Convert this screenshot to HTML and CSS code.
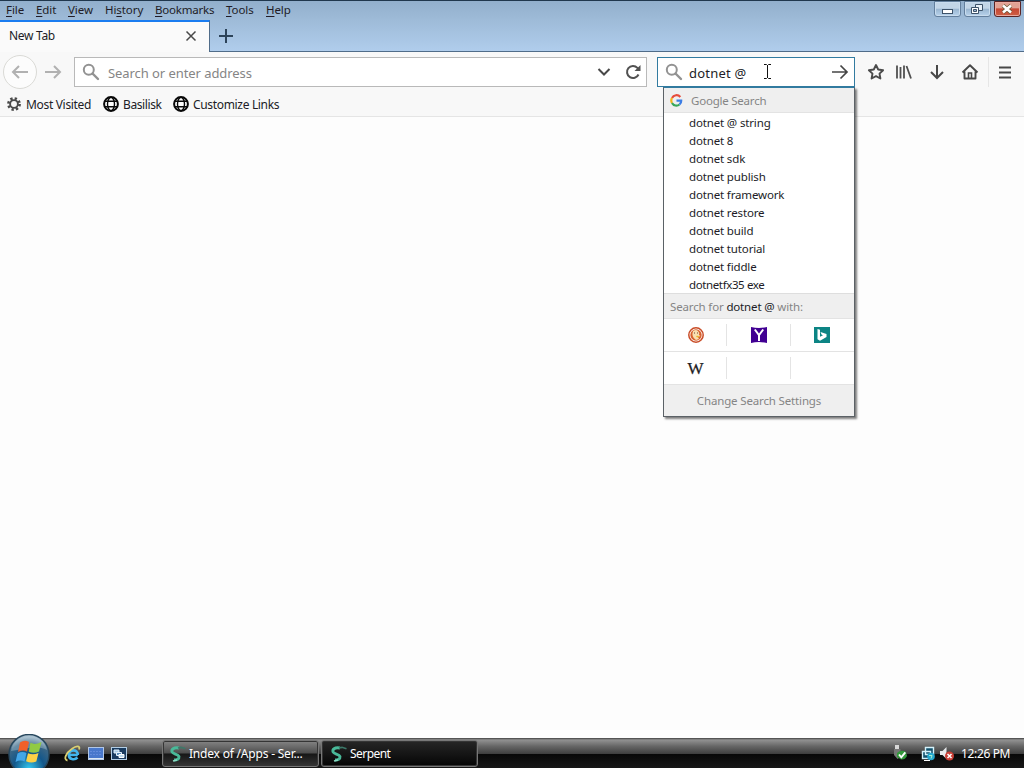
FILE: index.html
```html
<!DOCTYPE html>
<html lang="en">
<head>
<meta charset="utf-8">
<title>New Tab</title>
<link rel="stylesheet" href="styles.css">
</head>
<body>
<svg class="defs" width="0" height="0">
  <defs>
    <symbol id="lens" viewBox="0 0 18 18"><circle cx="6.8" cy="6.8" r="5" fill="none" stroke="currentColor" stroke-width="2"/><path d="M10.500 10.500L16 16" stroke="currentColor" stroke-width="2.400" stroke-linecap="round"/></symbol>
    <symbol id="globe" viewBox="0 0 16 16"><circle cx="8" cy="8" r="6.900" fill="#fff" stroke="#080808" stroke-width="2"/><ellipse cx="8" cy="8" rx="3.500" ry="6.600" fill="none" stroke="#080808" stroke-width="1.400"/><path d="M2 5.300h12M2 10.700h12" stroke="#080808" stroke-width="1.500"/></symbol>
    <symbol id="serpent" viewBox="0 0 18 18"><path d="M10 3C4.500 2 2 4.500 3.200 7.200c1 2 6 1.800 6.800 4.300.3 2.500-2 3.500-5 3.500" fill="none" stroke="#49b999" stroke-width="2.900"/><path d="M9 3l3-.7 4.500 1.500" fill="none" stroke="#3c7869" stroke-width="1.700"/><path d="M4 16l4-1" stroke="#8bdcc5" stroke-width="1.500"/></symbol>
  </defs>
</svg>
<div class="screen">
  <header class="titlebar">
    <nav class="menu">
      <span class="m-file"><u>F</u>ile</span><span class="m-edit"><u>E</u>dit</span><span class="m-view"><u>V</u>iew</span><span class="m-history">Hi<u>s</u>tory</span><span class="m-bookmarks"><u>B</u>ookmarks</span><span class="m-tools"><u>T</u>ools</span><span class="m-help"><u>H</u>elp</span>
    </nav>
    <div class="window-buttons">
      <span class="win"><svg width="26" height="15" viewBox="0 0 26 15"><rect x="8.500" y="8.500" width="10" height="4" fill="#fff" stroke="#3d5269"/></svg></span>
      <span class="win"><svg width="26" height="15" viewBox="0 0 26 15"><path d="M11.500 3.500h7v6h-7z" fill="#e8f0f8" stroke="#3d5269"/><path d="M7.500 6.500h7v6h-7z" fill="#fff" stroke="#3d5269"/><path d="M9.500 8.500h3v2h-3z" fill="#9bb8d6" stroke="#3d5269"/></svg></span>
      <span class="win close"><svg width="26" height="15" viewBox="0 0 26 15"><path d="M9 4.500l8 7M17 4.500l-8 7" stroke="#653" stroke-width="4"/><path d="M9 4.500l8 7M17 4.500l-8 7" stroke="#fff" stroke-width="2.600"/></svg></span>
    </div>
  </header>
  <div class="tabs">
    <div class="tab"><span class="tab-name">New Tab</span><svg width="12" height="12" viewBox="0 0 12 12"><path d="M1.500 1.500l9 9M10.500 1.500l-9 9" stroke="#484848" stroke-width="1.500"/></svg></div>
    <div class="new-tab"><svg width="16" height="16" viewBox="0 0 16 16"><path d="M8 1v14M1 8h14" stroke="#2c4359" stroke-width="2"/></svg></div>
  </div>
  <div class="toolbar">
    <div class="back"><svg width="18" height="16" viewBox="0 0 18 16"><path d="M17 8H2M8 2L2 8l6 6" fill="none" stroke="#b1b1b1" stroke-width="2"/></svg></div>
    <svg class="forward" width="18" height="16" viewBox="0 0 18 16"><path d="M1 8h15M10 2l6 6-6 6" fill="none" stroke="#b1b1b1" stroke-width="2"/></svg>
    <div class="address">
      <svg class="lens" width="18" height="18"><use href="#lens"/></svg>
      <span class="placeholder">Search or enter address</span>
      <svg class="chevron" width="14" height="10" viewBox="0 0 14 10"><path d="M1.500 2L7 7.500 12.500 2" fill="none" stroke="#484848" stroke-width="2"/></svg>
      <svg width="18" height="18" viewBox="0 0 18 18"><path d="M14.500 11.500A6 6 0 1 1 13.400 4.900L15.500 7" fill="none" stroke="#515151" stroke-width="2"/><path d="M16.500 2v6h-6z" fill="#515151"/></svg>
    </div>
    <div class="search">
      <svg class="lens" width="18" height="18"><use href="#lens"/></svg>
      <span class="query">dotnet @</span>
      <svg width="18" height="16" viewBox="0 0 18 16"><path d="M1 8h15M9.500 1.500L16 8l-6.500 6.500" fill="none" stroke="#454545" stroke-width="1.700"/></svg>
    </div>
    <div class="tools">
      <svg width="18" height="18" viewBox="0 0 18 18"><path d="M9 2l2.200 4.500 4.900.7-3.600 3.400.9 4.900L9 13.200l-4.400 2.300.9-4.900L1.900 7.200l4.900-.7z" fill="none" stroke="#4b4b4b" stroke-width="1.900" stroke-linejoin="round"/></svg>
      <svg width="18" height="18" viewBox="0 0 18 18"><path d="M2 2.500v13M5.500 4v11.500M9 2.500v13M11.500 3l4.500 12.500" stroke="#505050" stroke-width="1.800"/></svg>
      <svg width="18" height="18" viewBox="0 0 18 18"><path d="M9 2v13M3 9l6 6 6-6" fill="none" stroke="#484848" stroke-width="2"/></svg>
      <svg width="18" height="18" viewBox="0 0 18 18"><path d="M1.500 9.500L9 2.200l7.500 7.300M3.500 8.500v7h11v-7" fill="none" stroke="#484848" stroke-width="1.900" stroke-linejoin="round"/><path d="M7.500 15.500V10h3v5.500" fill="none" stroke="#484848" stroke-width="1.600"/></svg>
    </div>
    <div class="hamburger"><svg width="12" height="13" viewBox="0 0 12 13"><path d="M0 1.500h12M0 6.500h12M0 11.500h12" stroke="#484848" stroke-width="1.800"/></svg></div>
  </div>
  <div class="bookmarks">
    <svg width="14" height="14" viewBox="0 0 14 14"><circle cx="7" cy="7" r="5.600" fill="none" stroke="#4a4a4a" stroke-width="2.600" stroke-dasharray="2.300 2.098"/><circle cx="7" cy="7" r="3.900" fill="#f8f8f8" stroke="#4a4a4a" stroke-width="1.900"/></svg>
    <span class="bk-visited">Most Visited</span>
    <svg width="16" height="16"><use href="#globe"/></svg><span class="bk-basilisk">Basilisk</span>
    <svg width="16" height="16"><use href="#globe"/></svg><span class="bk-links">Customize Links</span>
  </div>
  <main class="page"></main>
  <footer class="taskbar">
    <div class="start"><svg width="44" height="34" viewBox="0 0 44 34">
      <defs><radialGradient id="orb" cx=".5" cy=".85" r=".85"><stop offset="0" stop-color="#35c8ef"/><stop offset=".45" stop-color="#14578a"/><stop offset=".75" stop-color="#3b6685"/><stop offset="1" stop-color="#bed0dc"/></radialGradient></defs>
      <circle cx="22" cy="20.500" r="20" fill="url(#orb)" stroke="#27475d" stroke-width="1.500"/>
      <path d="M4 17C7-2 36-3 40 16 30 10 17 15 4 17z" fill="#dcebf2" opacity=".3"/>
      <path d="M13 8.500q4.500-3 9-.5l-2 9.500q-4-2.300-9 .4z" fill="#f0602a"/><path d="M23.500 8.800q4.500 2.500 11-.8l-2.500 9.500q-5 2.500-10.300.2z" fill="#91ca43"/><path d="M10.500 19.500q4.500-2.500 9-.5l-2 8.500q-4-2-9 .5z" fill="#43a6e8"/><path d="M21 19.200q5 2.200 10.500-.2l-2.200 8.500q-5 2.300-10.200-.2z" fill="#fcd046"/>
    </svg></div>
    <div class="quick">
      <svg width="17" height="17" viewBox="0 0 17 17"><path d="M13.800 10H5.500M13.500 12.500c-3 3-8.800 2-8.600-2.800.2-5.500 8.800-6 9 .3" fill="none" stroke="#42b4ec" stroke-width="2.700"/><path d="M3.500 15.500C-1 14.500 2 8 8 3.800 13-.2 16.500 1 15 4.500" fill="none" stroke="#d9cf72" stroke-width="1.800"/></svg>
      <svg width="16" height="14" viewBox="0 0 16 14"><rect x=".5" y=".5" width="15" height="12" fill="#4978cc" stroke="#b1c7e7"/><path d="M2 4.500h11M2 7.500h12" stroke="#638bdb" stroke-dasharray="2 1"/><path d="M1 11.500h14" stroke="#dce8f5"/></svg>
      <svg width="16" height="14" viewBox="0 0 16 14"><rect x=".5" y=".5" width="15" height="12" fill="#193b60" stroke="#b3cee5"/><path d="M3 3h5v3H3z" fill="#a9cbe5" stroke="#e4f1fb"/><path d="M5.500 5.500h5v3h-5z" fill="#5589b7" stroke="#e4f1fb"/><path d="M8 7.500h5v3H8z" fill="#bddcf1" stroke="#fff"/></svg>
    </div>
    <div class="tasks">
      <div class="task"><svg width="18" height="18"><use href="#serpent"/></svg><span class="task-index">Index of /Apps - Ser...</span></div>
      <div class="task active"><svg width="18" height="18"><use href="#serpent"/></svg><span class="task-serpent">Serpent</span></div>
    </div>
    <div class="tray">
      <svg class="usb" width="16" height="17" viewBox="0 0 16 17"><path d="M3 0h4v4H3z" fill="#d8d8d8"/><path d="M2 4h6.500v8l-3 2-3.500-4z" fill="#777"/><path d="M5 8q4-4 9-1l1 4q-2 4-6 3.500L5 12z" fill="#32983b"/><path d="M7 9.500l2.300 2.800 4-5" fill="none" stroke="#fff" stroke-width="1.900"/></svg>
      <svg width="16" height="16" viewBox="0 0 16 16"><path d="M5.500 1.500h8v7h-8zM2.500 5.500h8v7h-8z" fill="#12516c" stroke="#d5f2fb" stroke-width="1.400"/><path d="M4 14.500h6" stroke="#fff"/><circle cx="11" cy="10.500" r="3.800" fill="#26a7cd"/><path d="M9 9.500h3l-1 3" stroke="#a4efcf" fill="none"/></svg>
      <svg width="16" height="16" viewBox="0 0 16 16"><path d="M1 5h2.500L7.500 1v12l-4-4H1z" fill="#e7eaec"/><circle cx="10.500" cy="10" r="4.500" fill="#c93e35"/><path d="M8.500 8l4 4M12.500 8l-4 4" stroke="#fff" stroke-width="1.500"/></svg>
      <span class="clock">12:26 PM</span>
    </div>
  </footer>

  <section class="popup">
    <div class="provider"><svg width="13" height="13" viewBox="0 0 13 13" fill="none" stroke-width="2.200"><path d="M10.300 3A5 5 0 0 0 2 4" stroke="#e64b3b"/><path d="M2 4a5 5 0 0 0 0 5" stroke="#f3b41b"/><path d="M2 9a5 5 0 0 0 7.500 1.500" stroke="#38a75a"/><path d="M9.500 10.500q1.800-1.500 1.700-3.800H6.500" stroke="#3b7de5"/></svg><span>Google Search</span></div>
    <ul>
      <li>dotnet @ string</li><li>dotnet 8</li><li>dotnet sdk</li><li>dotnet publish</li><li>dotnet framework</li><li>dotnet restore</li><li>dotnet build</li><li>dotnet tutorial</li><li>dotnet fiddle</li><li class="fx">dotnetfx35 exe</li>
    </ul>
    <div class="with"><span>Search for <b>dotnet @</b> with:</span></div>
    <div class="engines">
      <div><svg width="16" height="16" viewBox="0 0 16 16"><circle cx="8" cy="8" r="7.200" fill="#fff" stroke="#c94d28" stroke-width="1.500"/><circle cx="8" cy="8" r="5.700" fill="#d8612e"/><path d="M5 4q3-2 5 0 2 2 1 4l1.500 1-2.500 1 1 2-3 1Q3 10 5 4z" fill="#f8deb0"/><path d="M8 9q2-.5 3.500.5l-2.500 1z" fill="#edb527"/><path d="M6 6h1M9 6h1" stroke="#704232"/></svg></div>
      <div><svg width="16" height="16" viewBox="0 0 16 16"><path d="M0 0q8 2 16 0v16q-8-2-16 0z" fill="#410093"/><path d="M3.800 2.500L8 8l4.200-5.500M8 8v6" fill="none" stroke="#fff" stroke-width="2"/></svg></div>
      <div><svg width="16" height="16" viewBox="0 0 16 16"><path d="M0 0h16v16H0z" fill="#0c8484"/><path d="M3.500 2l2.500.8v7l3-1.600-1.500-.7-1-2.500 6 2v3L6 13.800l-2.500-1.500z" fill="#fff"/></svg></div>
      <div><span class="wiki">W</span></div><div></div><div></div>
    </div>
    <div class="settings"><span>Change Search Settings</span></div>
  </section>
  <svg class="cursor" width="9" height="17" viewBox="0 0 9 17"><path d="M1 1.500h2.500l1 1 1-1H8M4.500 2v13M1 15.500h2.500l1-1 1 1H8" fill="none" stroke="#111"/></svg>
</div>
</body>
</html>
```
FILE: styles.css
```css
* { box-sizing: border-box; }
body { margin: 0; font: 12px/18px "Noto Sans", "Open Sans", sans-serif; color: #211c26; overflow: hidden; }
svg { display: block; flex: none; }
.defs { position: absolute; }
.screen { position: relative; width: 1024px; height: 768px; display: flex; flex-direction: column; background: #fdfdfd; white-space: nowrap; }
.titlebar { height: 20px; flex: none; display: flex; justify-content: space-between; background: linear-gradient(#92afcc, #9ebbd8); border-top: 1px solid #20374d; }
.menu { display: flex; gap: 12px; padding-left: 6px; font-size: 11.5px; letter-spacing: -.08px; }
.menu u { text-underline-offset: 2px; }
.m-file { width: 18px; }
.m-edit { width: 20px; }
.m-view { width: 25px; }
.m-history { width: 38px; }
.m-bookmarks { width: 59px; letter-spacing: -.2px; }
.m-tools { width: 28px; }
.window-buttons { display: flex; gap: 3px; padding: 0 3px 0 0; }
.win { width: 27px; height: 16px; border: 1px solid #637f9d; border-radius: 0 0 3px 3px; background: linear-gradient(#c2d5e7 45%, #99b5d0 50%, #b8d3ec); box-shadow: inset 0 0 0 1px #c9dcee; overflow: hidden; }
.win svg { margin: -1px 0 0 -1px; }
.close { border-color: #592425; background: linear-gradient(#e1a294 40%, #c54835 50%, #cf6044); box-shadow: inset 0 0 0 1px #e9aaa0; }
.tabs { height: 32px; flex: none; display: flex; background: linear-gradient(#9ebbd8, #b0cdec); border-bottom: 1px solid #506c89; }
.tab { width: 210px; height: 32px; border-top: 2px solid #1a7cf0; border-right: 1px solid #506c89; background: #fafafa; display: flex; align-items: center; justify-content: space-between; padding: 0 12px 2px 9px; }
.tab-name { letter-spacing: -.3px; }
.new-tab { padding: 8px; }
.toolbar { height: 40px; flex: none; background: #f8f8f8; display: flex; align-items: center; padding-left: 3px; }
.back { width: 34px; height: 34px; border: 1px solid #dadad6; border-radius: 50%; display: grid; place-items: center; background: #fcfcfc; }
.forward { margin: 0 12px 0 7px; }
.address { width: 573px; height: 30px; border: 1px solid #b9b9b9; background: #fff; display: flex; align-items: center; padding: 0 4px 0 7px; }
.lens { color: #929292; }
.address .lens { margin-right: 8px; }
.placeholder { color: #858585; font-size: 13px; letter-spacing: -.07px; padding-top: 2px; }
.chevron { margin-left: auto; margin-right: 13px; }
.search { width: 198px; height: 30px; margin-left: 10px; border: 1px solid #327ba0; background: #fff; display: flex; align-items: center; padding: 0 5px 0 7px; }
.query { margin-left: 6px; margin-right: auto; padding-top: 2px; font-size: 13px; letter-spacing: .2px; }
.tools { display: flex; gap: 13px; margin-left: 12px; }
.tools svg:nth-child(2) { margin-left: -3px; }
.tools svg:nth-child(3) { margin-left: 2px; }
.tools svg:nth-child(4) { margin-left: 2px; }
.hamburger { height: 30px; margin-left: 9px; padding-left: 10px; border-left: 1px solid #e6e6e6; display: flex; align-items: center; }
.bookmarks { height: 25px; flex: none; display: flex; align-items: center; background: #f8f8f8; border-bottom: 1px solid #e5e5e5; padding-left: 7px; }
.bookmarks span { margin-left: 4px; padding-top: 1px; }
.bookmarks .bk-visited { width: 66px; margin-left: 5px; margin-right: 11px; letter-spacing: -.32px; }
.bookmarks .bk-basilisk { width: 39px; margin-right: 11px; letter-spacing: -.4px; }
.bk-links { letter-spacing: -.33px; }
.page { flex: 1; background: #fdfdfd; }
.taskbar { height: 30px; flex: none; display: flex; align-items: center; background: linear-gradient(#777 0, #8e8e8e 5%, #666 25%, #404040 50%, #080808 53%, #171717); border-top: 1px solid #555; color: #fff; }
.start { width: 64px; height: 34px; margin-top: -5px; padding-left: 7px; }
.quick { display: flex; align-items: center; gap: 7px; width: 98px; }
.tasks { display: flex; gap: 2px; }
.task { width: 157px; height: 27px; border: 1px solid #777; border-radius: 3px; box-shadow: inset 0 0 0 1px #353535; display: flex; align-items: center; padding-left: 6px; background: linear-gradient(#858585, #4d4d4d 48%, #161616 52%, #353535); }
.task span { margin-left: 2px; }
.task-index { letter-spacing: -.2px; }
.task-serpent { letter-spacing: -.6px; padding-top: 1px; }
.active { background: linear-gradient(#262626, #050505); padding-left: 8px; }
.task-serpent { letter-spacing: -.55px; }
.tray { display: flex; align-items: center; margin-left: auto; padding-right: 14px; gap: 3px; }
.usb { margin-right: 9px; }
.clock { width: 49px; margin-left: 3px; letter-spacing: -.35px; }
.popup { position: absolute; left: 663px; top: 87px; width: 192px; height: 330px; background: #fff; border: 1px solid #5b6166; border-top-color: #327ba0; box-shadow: 2px 2px 2px #00000080; font-size: 11.5px; letter-spacing: -.15px; }
.provider, .with { display: flex; align-items: center; background: #efefef; color: #858585; border-bottom: 1px solid #e3e3e3; height: 25px; padding-left: 6px; }
.provider span { margin-left: 8px; padding-top: 2px; letter-spacing: -.22px; }
.popup ul { list-style: none; margin: 0; padding: 1px 0 0 25px; height: 180px; }
.popup li { height: 18px; line-height: 18px; }
.popup .fx { letter-spacing: -.38px; }
.with { height: 26px; border-top: 1px solid #dedede; }
.with span { padding-top: 2px; }
.with b { font-weight: 400; color: #211c26; }
.engines { height: 66px; display: grid; grid-template-columns: 63px 64px 63px; grid-template-rows: 33px 33px; }
.engines div { display: grid; place-items: center; border-bottom: 1px solid #e3e3e3; background: linear-gradient(#e4e4e4, #e4e4e4) right center / 1px 22px no-repeat; }
.engines div:nth-child(3n) { background: none; padding-right: 2px; }
.wiki { font: 17px "Liberation Serif", serif; padding-top: 2px; -webkit-text-stroke: .25px #222; }
.settings { height: 31px; background: #efefef; color: #858585; display: grid; place-items: center; }
.cursor { position: absolute; left: 763px; top: 63px; }
```
